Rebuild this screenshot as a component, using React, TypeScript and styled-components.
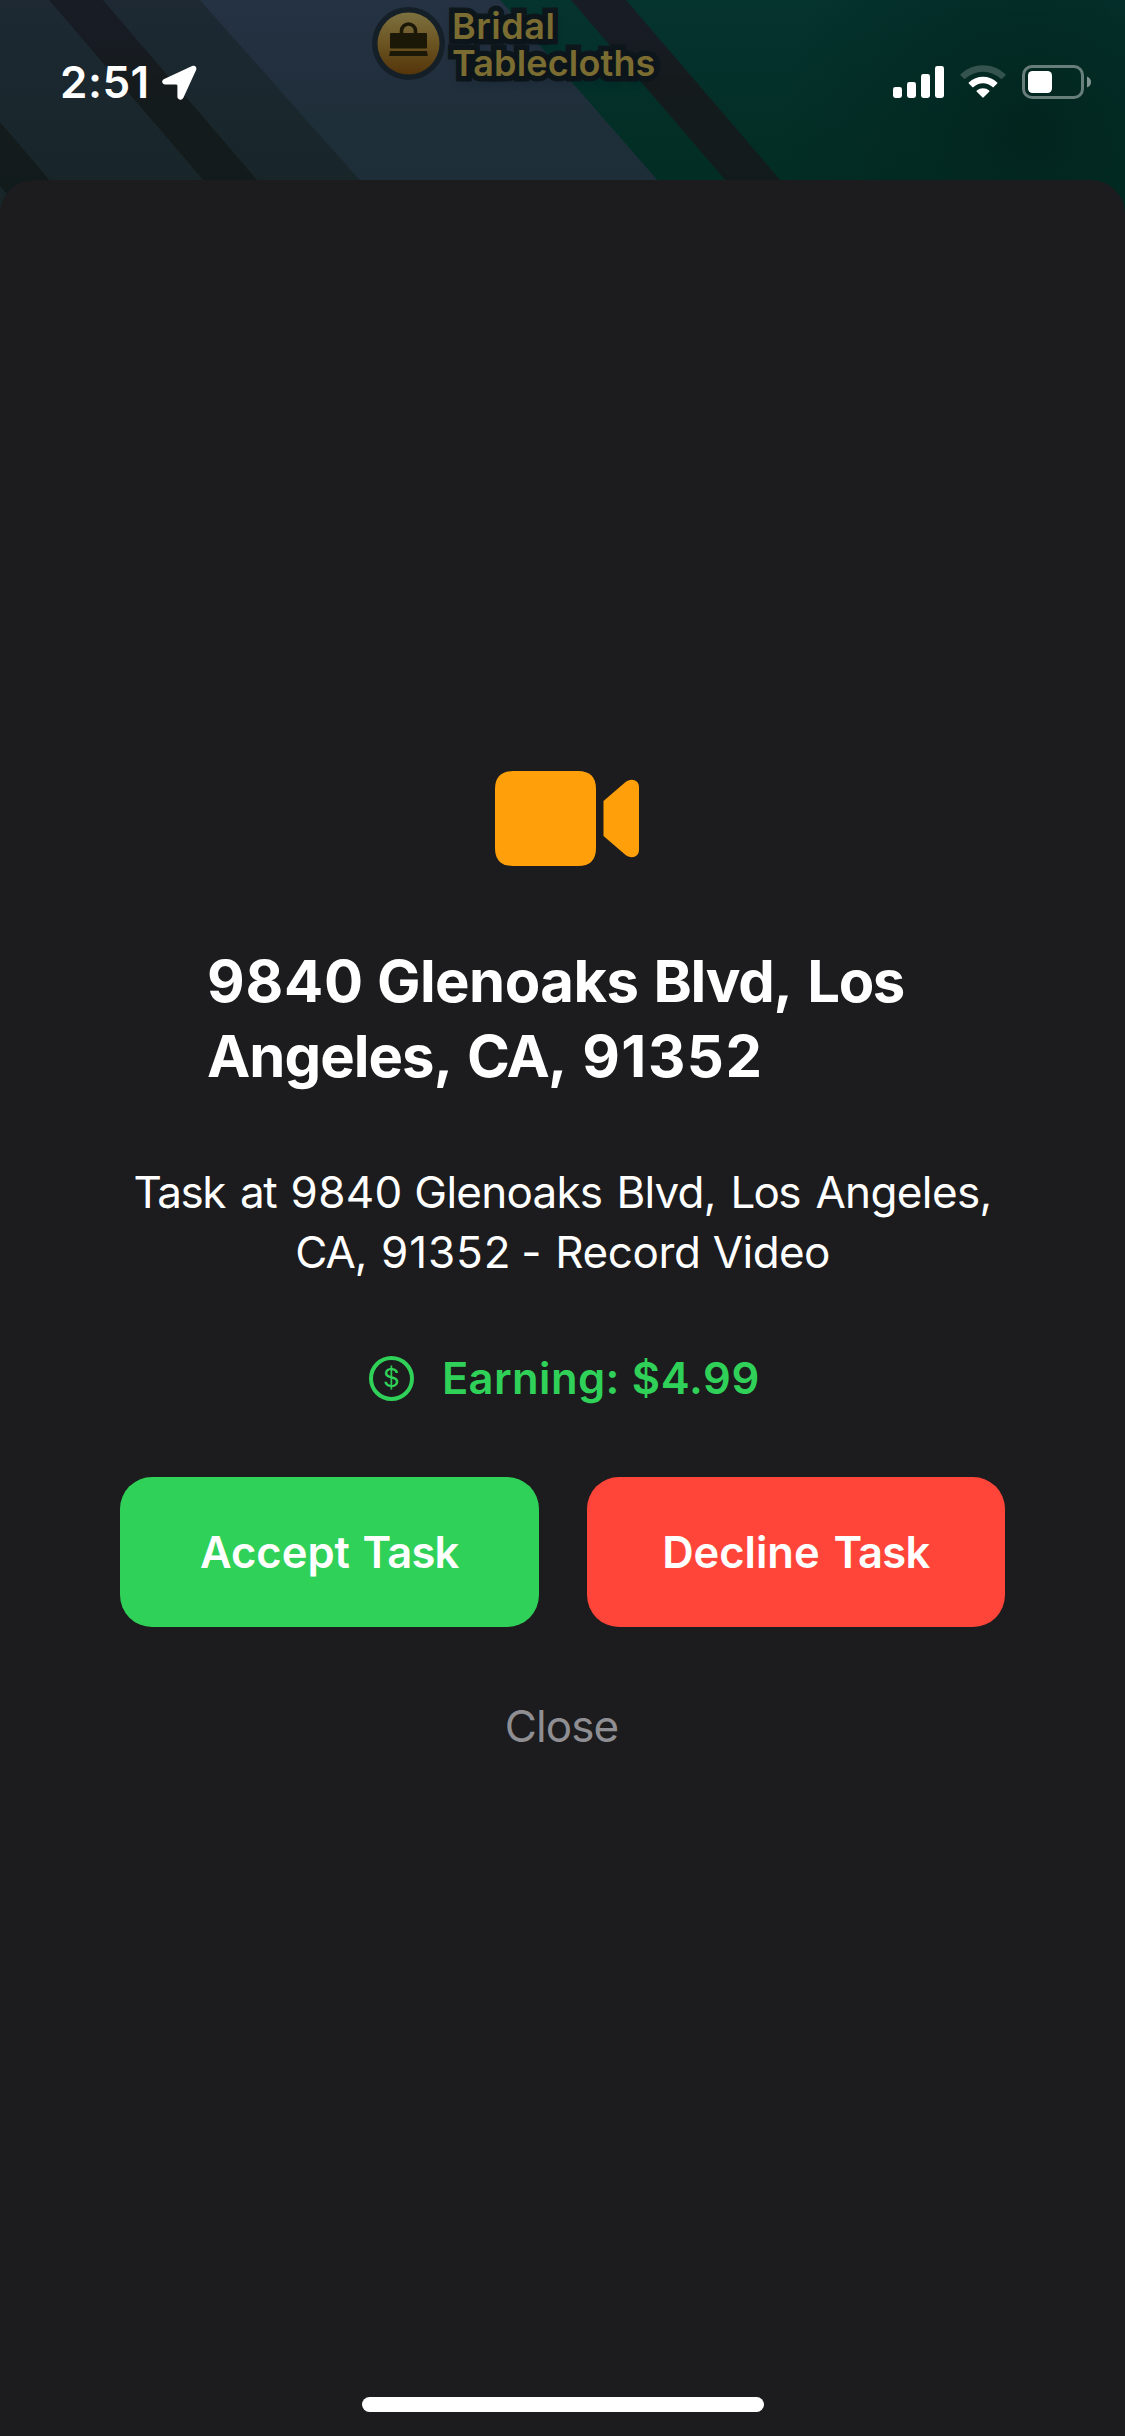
import React from "react";
import styled, { createGlobalStyle } from "styled-components";

const GlobalStyle = createGlobalStyle`
  html, body { margin: 0; padding: 0; background: #1c1c1e; }
  *, *::before, *::after { box-sizing: border-box; }
`;

const Screen = styled.div`
  position: relative;
  display: flex;
  flex-direction: column;
  width: 1125px;
  height: 2436px;
  overflow: hidden;
  background: #1c1c1e;
  color: #ffffff;
  font-family: Inter, "Liberation Sans", sans-serif;
`;

const Backdrop = styled.div`
  position: absolute;
  top: 0;
  left: 0;
  width: 1125px;
  height: 230px;
`;

const MapCanvas = styled.svg`
  display: block;
`;

const Place = styled.div`
  position: absolute;
  left: 372px;
  top: 7px;
  display: flex;
  align-items: flex-start;
  gap: 7px;
`;

const PlaceBadge = styled.svg`
  display: block;
  overflow: visible;
`;

const PlaceName = styled.div`
  padding-top: 1px;
  color: #7b6c31;
  font-size: 36px;
  font-weight: 600;
  line-height: 37px;
  white-space: nowrap;
  -webkit-text-stroke: 11px rgb(14, 23, 28);
  paint-order: stroke fill;
  text-shadow: 0 6px 10px rgba(5, 18, 22, 0.35);
`;

const PlaceLine = styled.div<{ $spacing: number }>`
  letter-spacing: ${(p) => p.$spacing}px;
`;

const StatusBar = styled.header`
  position: relative;
  display: flex;
  justify-content: space-between;
  align-items: flex-start;
  height: 180px;
  padding: 0 33px 0 60px;
`;

const Clock = styled.div`
  display: flex;
  align-items: flex-start;
  gap: 12px;
  padding-top: 52px;
  font-size: 44px;
  font-weight: 600;
  line-height: 60px;
  letter-spacing: 0.5px;
`;

const LocationArrow = styled.svg`
  display: block;
  margin-top: 13px;
`;

const Indicators = styled.div`
  display: flex;
  align-items: flex-start;
  gap: 16px;
  padding-top: 65px;
`;

const Sheet = styled.main`
  position: relative;
  display: flex;
  flex: 1;
  flex-direction: column;
  align-items: center;
  padding: 591px 120px 24px;
  border-radius: 34px 34px 0 0;
  background: #1c1c1e;
`;

const VideoIcon = styled.svg`
  display: block;
  margin-left: 9px;
`;

const Title = styled.h1`
  width: 709px;
  margin: 78px 0 0;
  font-size: 58px;
  font-weight: 700;
  line-height: 75px;
  white-space: nowrap;
`;

const Description = styled.p`
  margin: 68px 0 0;
  font-size: 44px;
  font-weight: 400;
  line-height: 60px;
  text-align: center;
  white-space: nowrap;
`;

const Line = styled.span`
  display: block;
`;

const Word = styled.span<{ $spacing?: number; $shift?: number }>`
  margin-left: ${(p) => p.$shift ?? 0}px;
  letter-spacing: ${(p) => p.$spacing ?? 0}px;
`;

const Earning = styled.div`
  display: flex;
  align-items: center;
  gap: 28px;
  height: 60px;
  margin: 66px 0 0 4px;
  color: #30d158;
  font-size: 43.5px;
  font-weight: 560;
  line-height: 60px;
  white-space: nowrap;
`;

const Coin = styled.span`
  display: flex;
  align-items: center;
  justify-content: center;
  width: 45px;
  height: 45px;
  border: 4px solid currentColor;
  border-radius: 50%;
  font-size: 26px;
  font-weight: 400;
  line-height: 1;
`;

const Actions = styled.div`
  display: grid;
  grid-template-columns: 1fr 1fr;
  gap: 48px;
  width: 885px;
  margin-top: 69px;
`;

const ActionButton = styled.button<{ $color: string }>`
  height: 150px;
  padding: 0 0 1px;
  border: 0;
  border-radius: 32px;
  background: ${(p) => p.$color};
  color: #ffffff;
  font: inherit;
  font-size: 43.5px;
  font-weight: 600;
  line-height: 60px;
`;

const CloseButton = styled.button`
  margin: 69px 2px 0 0;
  padding: 0;
  border: 0;
  background: none;
  color: #8e8e93;
  font: inherit;
  font-size: 44px;
  line-height: 60px;
  letter-spacing: -0.95px;
`;

const HomeIndicator = styled.div`
  width: 402px;
  height: 15px;
  margin: auto 0 0 1px;
  border-radius: 8px;
  background: #ffffff;
`;

function MapBackdrop() {
  return (
    <MapCanvas width="1125" height="230" viewBox="0 0 1125 230">
      <defs>
        <linearGradient id="block" x1="0" y1="0" x2="0" y2="180" gradientUnits="userSpaceOnUse">
          <stop offset="0" stopColor="#1e2933" />
          <stop offset="0.3" stopColor="#1b2830" />
          <stop offset="1" stopColor="#182529" />
        </linearGradient>
        <linearGradient id="building" x1="0" y1="0" x2="0" y2="180" gradientUnits="userSpaceOnUse">
          <stop offset="0" stopColor="#243243" />
          <stop offset="0.4" stopColor="#212f3e" />
          <stop offset="0.65" stopColor="#1f2f39" />
          <stop offset="1" stopColor="#1d2e38" />
        </linearGradient>
        <linearGradient id="road" x1="0" y1="0" x2="0" y2="180" gradientUnits="userSpaceOnUse">
          <stop offset="0" stopColor="#181c25" />
          <stop offset="0.25" stopColor="#171b22" />
          <stop offset="0.45" stopColor="#151b1d" />
          <stop offset="1" stopColor="#121b1b" />
        </linearGradient>
        <linearGradient id="park" x1="0" y1="0" x2="0" y2="180" gradientUnits="userSpaceOnUse">
          <stop offset="0" stopColor="#05332e" />
          <stop offset="1" stopColor="#022d24" />
        </linearGradient>
        <radialGradient id="shade" cx="1030" cy="130" r="250" gradientUnits="userSpaceOnUse">
          <stop offset="0" stopColor="#02241d" stopOpacity="0.9" />
          <stop offset="0.4" stopColor="#022620" stopOpacity="0.6" />
          <stop offset="1" stopColor="#02261f" stopOpacity="0" />
        </radialGradient>
      </defs>
      <rect width="1125" height="230" fill="url(#block)" />
      <path d="M200 0H510L700 230H404Z" fill="url(#building)" />
      <path d="M49 0H103L300 230H246Z" fill="url(#road)" />
      <path d="M0 122L92 230H38L0 186Z" fill="url(#road)" />
      <path d="M500 0H1125V230H701Z" fill="url(#park)" />
      <path d="M626 0H1125V230H822Z" fill="url(#shade)" />
      <path d="M571 0H626L823 230H768Z" fill="url(#road)" />
    </MapCanvas>
  );
}

function PlaceLabel() {
  return (
    <Place>
      <PlaceBadge width="73" height="73" viewBox="0 0 73 73">
        <defs>
          <linearGradient id="badge" x1="0" y1="0" x2="0" y2="1">
            <stop offset="0" stopColor="#7d7140" />
            <stop offset="0.5" stopColor="#6b5422" />
            <stop offset="1" stopColor="#54350a" />
          </linearGradient>
        </defs>
        <circle cx="36.5" cy="36.5" r="36.500" fill="#151f27" />
        <circle cx="36.5" cy="36.5" r="31" fill="url(#badge)" />
        <path d="M29.500 27V24a7 7 0 0 1 14 0V27" fill="none" stroke="#1b1808" strokeWidth="3.6" />
        <rect x="18" y="26" width="37" height="15.500" rx="1" fill="#1b1808" />
        <path d="M18 44H55L55.800 49H17.200Z" fill="#1b1808" />
      </PlaceBadge>
      <PlaceName>
        <PlaceLine $spacing={0.5}>Bridal</PlaceLine>
        <PlaceLine $spacing={0.15}>Tablecloths</PlaceLine>
      </PlaceName>
    </Place>
  );
}

export default function App() {
  return (
    <>
      <GlobalStyle />
      <Screen>
        <Backdrop>
          <MapBackdrop />
          <PlaceLabel />
        </Backdrop>
        <StatusBar>
          <Clock>
            2:51
            <LocationArrow width="35" height="35" viewBox="0 0 35 35">
              <path
                d="M2.2 14.1L30.1 1C32.8-.2 35.3 2.1 34.1 4.9L21.4 32.8C20 35.8 15.4 35 15.4 31.8V20.8Q15.4 19.6 14.2 19.6L3.2 19.5C-.2 19.4-1 15.6 2.2 14.1Z"
                fill="#fff"
              />
            </LocationArrow>
          </Clock>
          <Indicators>
            <svg width="51" height="34" viewBox="0 0 51 34" fill="#fff">
              <rect x="0" y="22" width="9" height="11" rx="2.4" />
              <rect x="14" y="17" width="9" height="16" rx="2.4" />
              <rect x="28" y="9" width="9" height="24" rx="2.4" />
              <rect x="42" y="1" width="9" height="32" rx="2.4" />
            </svg>
            <svg width="46" height="34" viewBox="0 0 46 34" fill="#fff">
              <path
                d="M.5 9.3A32.5 32.5 0 0 1 45.5 9.3Q46 9.8 45.5 10.3L42 13.8Q41.4 14.3 40.9 13.8A26.5 26.5 0 0 0 5.1 13.8Q4.6 14.3 4 13.8L.5 10.3Q0 9.8 .5 9.3Z"
                opacity="0.2"
              />
              <path d="M8.8 17.4A20.5 20.5 0 0 1 37.2 17.4Q37.8 18 37.2 18.6L33.7 22.1Q33.1 22.7 32.5 22.1A13.8 13.8 0 0 0 13.5 22.1Q12.9 22.7 12.3 22.1L8.8 18.6Q8.2 18 8.8 17.4Z" />
              <path d="M16.8 25.6A9.2 9.2 0 0 1 29.2 25.6Q29.8 26.2 29.2 26.8L23.7 32.3Q23 33 22.3 32.3L16.8 26.8Q16.2 26.2 16.8 25.6Z" />
            </svg>
            <svg width="70" height="34" viewBox="0 0 70 34">
              <rect x="1.5" y="1.5" width="59" height="31" rx="8.5" fill="none" stroke="#fff" strokeWidth="3" opacity="0.4" />
              <rect x="6" y="6" width="24" height="22" rx="4.5" fill="#fff" />
              <path d="M65 11.5Q69 13 69 17T65 22.5Z" fill="#fff" opacity="0.5" />
            </svg>
          </Indicators>
        </StatusBar>
        <Sheet>
          <VideoIcon width="144" height="95" viewBox="0 0 144 95" fill="#ff9f0a">
            <path d="M18 0H83Q101 0 101 18V77Q101 95 83 95H18Q0 95 0 77V18Q0 0 18 0Z" />
            <path d="M108.5 30L130 11.500C136.500 6 144 9.500 144 16V79C144 85.500 136.500 89 130 83.500L108.500 65Z" />
          </VideoIcon>
          <Title>
            <Line>
              <Word $spacing={0.8} $shift={-1}>9840</Word>{" "}
              <Word $spacing={-0.54} $shift={-0.8}>Glenoaks</Word>{" "}
              <Word $spacing={-1.25} $shift={1.3}>Blvd,</Word>{" "}
              <Word $spacing={-1.5} $shift={2}>Los</Word>
            </Line>
            <Line>
              <Word $spacing={-0.96} $shift={-1}>Angeles,</Word>{" "}
              <Word $spacing={-1.85} $shift={1.3}>CA,</Word>{" "}
              <Word $spacing={1.5} $shift={2.9}>91352</Word>
            </Line>
          </Title>
          <Description>
            <Line>
              <Word $spacing={-1.4}>Task</Word>{" "}
              <Word $spacing={-1.4} $shift={2.5}>at</Word>{" "}
              <Word $spacing={0.3} $shift={1.9}>9840</Word>{" "}
              <Word $spacing={-0.75} $shift={-0.5}>Glenoaks</Word>{" "}
              <Word $spacing={-0.8} $shift={1.7}>Blvd,</Word>{" "}
              <Word $spacing={-1.8} $shift={2.6}>Los</Word>{" "}
              <Word $spacing={-0.63} $shift={3.4}>Angeles,</Word>
            </Line>
            <Line>
              <Word $spacing={-1}>CA,</Word>{" "}
              <Word $spacing={0.9} $shift={2.1}>91352</Word>{" "}
              <Word $shift={-2.6}>-</Word>{" "}
              <Word $spacing={-0.4} $shift={1.4}>Record</Word>{" "}
              <Word $spacing={-0.6}>Video</Word>
            </Line>
          </Description>
          <Earning>
            <Coin>$</Coin>
            <Line>
              <Word $spacing={0.4}>Earning:</Word>{" "}
              <Word $spacing={0.7} $shift={1}>$4.99</Word>
            </Line>
          </Earning>
          <Actions>
            <ActionButton $color="#30d158">
              <Word>Accept</Word> <Word $spacing={-0.8} $shift={1.6}>Task</Word>
            </ActionButton>
            <ActionButton $color="#ff453a">
              <Word>Decline</Word> <Word $spacing={-0.8} $shift={2.7}>Task</Word>
            </ActionButton>
          </Actions>
          <CloseButton>Close</CloseButton>
          <HomeIndicator />
        </Sheet>
      </Screen>
    </>
  );
}
